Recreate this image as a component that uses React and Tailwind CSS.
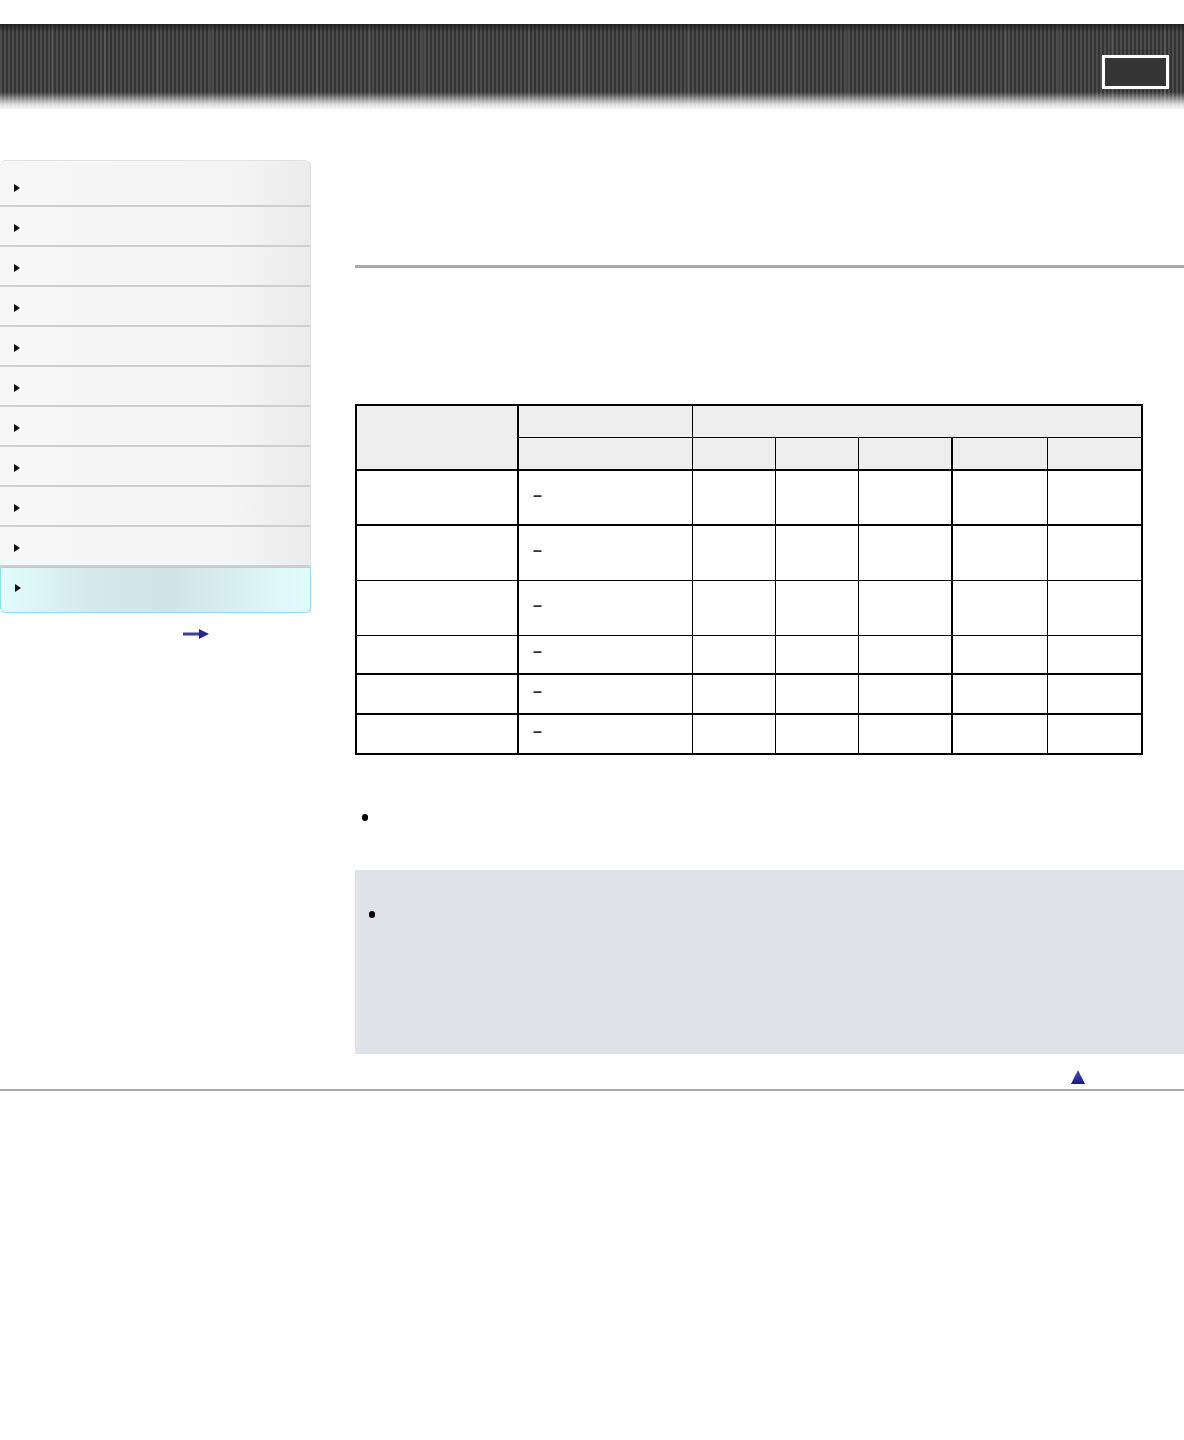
import React from 'react';

const navItems = Array.from({ length: 10 }, (_, i) => i);

const Marker = () => (
  <svg width="6" height="8" viewBox="0 0 6 8" className="shrink-0">
    <path d="M0 0 L6 4 L0 8 Z" fill="#111" />
  </svg>
);

const Sidebar = () => (
  <div className="w-[311px] shrink-0">
    <div className="rounded-t-md border-t border-r border-[#e2e2e2] bg-[linear-gradient(90deg,#f6f6f6_0%,#f5f5f5_75%,#ebebeb_100%)]">
      {navItems.map((i) => (
        <div
          key={i}
          className={`flex items-center pl-[14px] border-b-2 border-[#cfcfcf] ${i === 0 ? 'h-[46px] pt-[10px]' : 'h-[40px] pt-[4px]'}`}
        >
          <Marker />
        </div>
      ))}
      <div className="flex items-center pl-[14px] h-[46px] pb-[4px] -mr-px rounded-b-md border border-t border-[#8fdcf3] bg-[linear-gradient(90deg,#e2fcfe_0%,#d3e9eb_30%,#cfe5e7_55%,#d8eff1_75%,#e2fcfe_100%)]">
        <Marker />
      </div>
    </div>
    <div className="flex pl-[183px] pt-[16px]">
      <svg width="26" height="10" viewBox="0 0 26 10">
        <rect x="0" y="3.5" width="18" height="3" fill="#3a3f98" />
        <path d="M16 0 L26 5 L16 10 Z" fill="#232a8f" />
      </svg>
    </div>
  </div>
);

const th = 'bg-[#eeeeee] border border-black p-0';
const td = 'border border-black p-0 align-middle';

const bodyRows = [
  { h: 'h-[55px]', top: 'border-t-2' },
  { h: 'h-[55px]', top: 'border-t-2' },
  { h: 'h-[55px]', top: '' },
  { h: 'h-[39px]', top: '' },
  { h: 'h-[40px]', top: 'border-t-2' },
  { h: 'h-[40px]', top: 'border-t-2' },
];

const SpecTable = () => (
  <table className="table-fixed border-collapse border-2 border-black w-[786px]">
    <colgroup>
      <col className="w-[162px]" />
      <col className="w-[174px]" />
      <col className="w-[83px]" />
      <col className="w-[83px]" />
      <col className="w-[94px]" />
      <col className="w-[95px]" />
      <col className="w-[95px]" />
    </colgroup>
    <thead>
      <tr className="h-[32px]">
        <th rowSpan={2} className={`${th} border-b-2 border-r-2`}></th>
        <th className={th}></th>
        <th colSpan={5} className={th}></th>
      </tr>
      <tr className="h-[33px]">
        <th className={`${th} border-b-2`}></th>
        <th className={`${th} border-b-2`}></th>
        <th className={`${th} border-b-2`}></th>
        <th className={`${th} border-b-2`}></th>
        <th className={`${th} border-b-2 border-l-2`}></th>
        <th className={`${th} border-b-2`}></th>
      </tr>
    </thead>
    <tbody>
      {bodyRows.map((r, i) => (
        <tr key={i} className={r.h}>
          <td className={`${td} ${r.top} border-r-2`}></td>
          <td className={`${td} ${r.top} pl-[14px] text-[16px] font-bold leading-none text-[#333]`}>
            <span className="relative -top-[2px]">–</span>
          </td>
          <td className={`${td} ${r.top}`}></td>
          <td className={`${td} ${r.top}`}></td>
          <td className={`${td} ${r.top}`}></td>
          <td className={`${td} ${r.top} border-l-2`}></td>
          <td className={`${td} ${r.top}`}></td>
        </tr>
      ))}
    </tbody>
  </table>
);

const Main = () => (
  <div className="flex-1 ml-[44px] flex flex-col">
    <div className="mt-[105px] h-[3px] bg-[#aaaaaa]" />
    <div className="mt-[136px]">
      <SpecTable />
    </div>
    <div className="mt-[59px] pl-[7px]">
      <div className="w-[6px] h-[7px] rounded-full bg-black" />
    </div>
    <div className="mt-[49px] h-[184px] bg-[#dfe2e7] pl-[14px] pt-[41px]">
      <div className="w-[6px] h-[7px] rounded-full bg-black" />
    </div>
    <div className="flex justify-end pr-[99px] pt-[16px]">
      <svg width="14" height="14" viewBox="0 0 14 14">
        <defs>
          <linearGradient id="tri" x1="0" y1="0" x2="0" y2="1">
            <stop offset="0" stopColor="#4a55b8" />
            <stop offset="1" stopColor="#141a84" />
          </linearGradient>
        </defs>
        <path d="M7 0 L14 14 L0 14 Z" fill="url(#tri)" />
      </svg>
    </div>
  </div>
);

export default function App() {
  return (
    <div className="w-[1184px] min-h-[1440px] bg-white font-['Liberation_Sans',Arial,sans-serif]">
      <div className="pt-[24px]">
        <div className="relative h-[86px] bg-[linear-gradient(180deg,rgba(0,0,0,0.5)_0px,rgba(0,0,0,0)_8px,rgba(255,255,255,0)_68px,rgba(255,255,255,0.8)_80px,#ffffff_86px),repeating-linear-gradient(90deg,rgba(255,255,255,0)_0px,rgba(255,255,255,0)_51px,rgba(255,255,255,0.07)_51px,rgba(255,255,255,0.07)_53px),repeating-linear-gradient(90deg,#4c4c4c_0px,#4c4c4c_2px,#343434_2px,#343434_4px)]">
          <div className="absolute left-[1102px] top-[31px] w-[67px] h-[34px] border-[3px] border-white bg-[#353535]" />
        </div>
      </div>
      <div className="flex items-start mt-[50px]">
        <Sidebar />
        <Main />
      </div>
      <div className="mt-[5px] h-[2px] bg-[#aaaaaa]" />
    </div>
  );
}
